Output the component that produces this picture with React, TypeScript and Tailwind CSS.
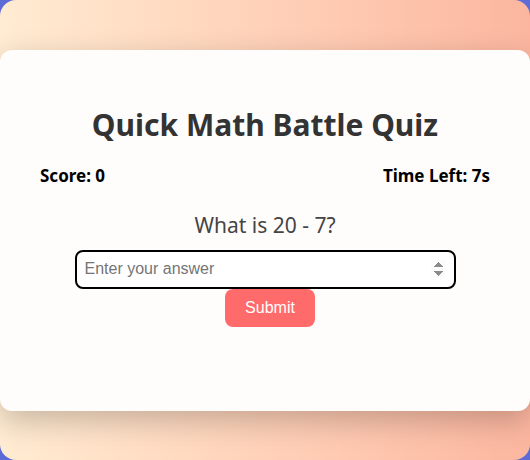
import React, { useState } from "react";

export default function App() {
  const [answer, setAnswer] = useState("");

  return (
    <div className="h-[460px] w-full bg-[#5c6bd6]">
      <div className="flex h-full w-full items-center rounded-[16px] bg-gradient-to-r from-[#ffecd2] to-[#fcb69f]">
        <div
          className="flex h-[361px] w-full flex-col items-center rounded-[12px] bg-[#fffcfc] px-10 pt-[57px] shadow-[0_10px_30px_rgba(0,0,0,0.22)]"
          style={{ fontFamily: '"Noto Sans", "Open Sans", sans-serif' }}
        >
          <h1 className="text-[30px] font-bold leading-[36px] text-[#333]">
            Quick Math Battle Quiz
          </h1>
          <div className="mt-[21px] flex w-full items-center justify-between text-[17px] font-bold leading-6 text-black">
            <span>Score: 0</span>
            <span>Time Left: 7s</span>
          </div>
          <p className="mt-6 text-[21px] leading-[27px] text-[#444]">What is 20 - 7?</p>
          <input
            type="number"
            autoFocus
            value={answer}
            onChange={(e) => setAnswer(e.target.value)}
            placeholder="Enter your answer"
            className="mt-[11px] h-[39px] w-[381px] rounded-[8px] border-2 border-black bg-white px-2 text-[16px] text-black outline-none placeholder:text-[#757575]"
            style={{ fontFamily: '"Liberation Sans", Arial, sans-serif' }}
          />
          <button
            type="button"
            className="ml-[10px] h-[38px] w-[90px] rounded-[8px] bg-[#ff6b6b] text-[16px] text-white"
            style={{ fontFamily: '"Liberation Sans", Arial, sans-serif' }}
          >
            Submit
          </button>
        </div>
      </div>
    </div>
  );
}
